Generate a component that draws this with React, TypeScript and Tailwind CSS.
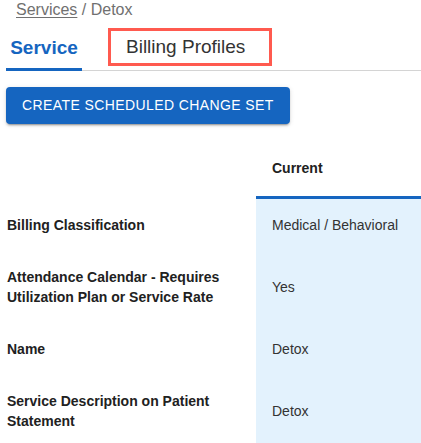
import React from "react";

const rows: { label: string; value: string }[] = [
  { label: "Billing Classification", value: "Medical / Behavioral" },
  { label: "Attendance Calendar - Requires Utilization Plan or Service Rate", value: "Yes" },
  { label: "Name", value: "Detox" },
  { label: "Service Description on Patient Statement", value: "Detox" },
];

export default function App() {
  return (
    <div className="min-h-[443px] bg-white pl-[6px] font-['Liberation_Sans',Arial,sans-serif] text-[#212121]">
      <div className="h-5 pl-[10px] text-[16px] leading-5 text-[#707070]">
        <span className="underline underline-offset-2">Services</span> / Detox
      </div>

      <div className="relative mt-[6px] flex h-[45px] items-start border-b border-[#d4d4d4]">
        <div className="relative flex h-[44px] w-[76px] items-center justify-center text-[19px] font-bold text-[#1565c0]">
          Service
          <div className="absolute bottom-[-1px] left-0 right-0 h-[3px] bg-[#1565c0]" />
        </div>
        <div className="ml-[26px] mt-[2px] flex h-[38px] w-[164px] items-center border-[3px] border-[#ff5a4f] pl-[15px] text-[19px] text-[#333]">
          Billing Profiles
        </div>
      </div>

      <button className="mt-4 flex h-[37px] items-center rounded-[4px] bg-[#1565c0] px-4 text-[14px] uppercase tracking-[0.4px] text-white shadow-[0_3px_1px_-2px_rgba(0,0,0,0.2),0_2px_2px_0_rgba(0,0,0,0.14),0_1px_5px_0_rgba(0,0,0,0.12)]">
        Create Scheduled Change Set
      </button>

      <div className="mt-4 grid grid-cols-[250px_1fr]">
        <div className="h-[59px]" />
        <div className="flex h-[59px] items-center border-b-[3px] border-[#1565c0] pl-4 text-[14px] font-bold leading-6">
          Current
        </div>
        {rows.map((r) => (
          <React.Fragment key={r.label}>
            <div className="py-4 pl-px pr-4 text-[14px] font-bold leading-5 text-[#212121]">{r.label}</div>
            <div className="flex items-center bg-[#e3f2fd] py-4 pl-4 text-[14px] leading-5 text-[#333]">{r.value}</div>
          </React.Fragment>
        ))}
      </div>
    </div>
  );
}
